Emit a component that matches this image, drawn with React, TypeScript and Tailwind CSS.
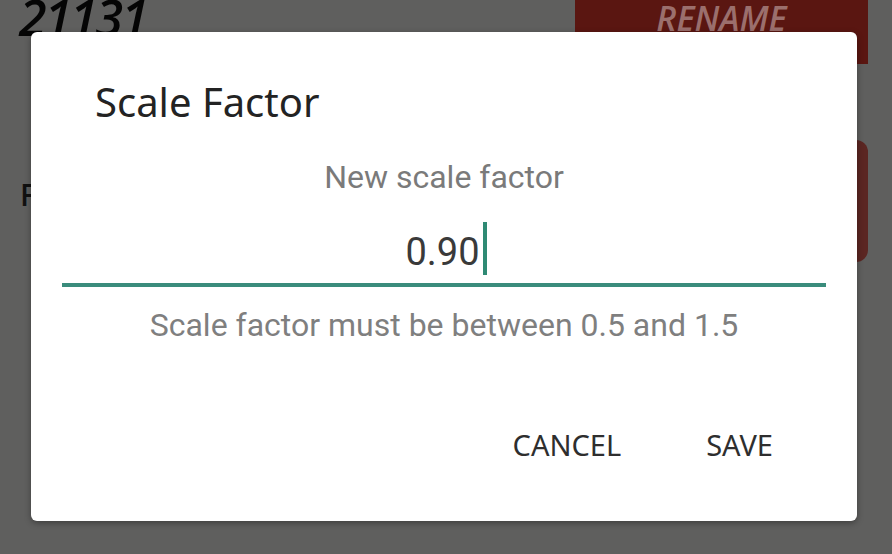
export default function App() {
  return (
    <div className="relative h-[554px] w-[892px] overflow-hidden bg-[#5f5f5e]">
      {/* page behind the dimmed overlay */}
      <div className="flex flex-col">
        <div className="flex items-start justify-between">
          <div
            className="ml-[19px] mt-[-8px] text-[50px] font-semibold italic leading-none tracking-[-2px] text-[#050505]"
            style={{ fontFamily: '"Open Sans", sans-serif' }}
          >
            21131
          </div>
          <div className="mr-[24px] flex h-[64px] w-[293px] items-start justify-center bg-[#5a1611] pt-[1px]">
            <span
              className="text-[34px] font-semibold italic leading-none text-[#9b6f6d]"
              style={{ fontFamily: '"Open Sans", sans-serif' }}
            >
              RENAME
            </span>
          </div>
        </div>
        <div className="mt-[76px] flex items-start justify-between">
          <div
            className="ml-[20px] mt-[40px] text-[30px] font-semibold leading-none text-[#111]"
            style={{ fontFamily: '"Open Sans", sans-serif' }}
          >
            Font size
          </div>
          <div className="mr-[24px] h-[122px] w-[293px] rounded-[12px] bg-[#5b2622]" />
        </div>
      </div>

      {/* dialog */}
      <div className="absolute left-[31px] top-[32px] flex h-[489px] w-[826px] flex-col rounded-[6px] bg-white shadow-[0_2px_6px_rgba(0,0,0,0.35)]">
        <div
          className="ml-[64px] mt-[50px] text-[40px] leading-none text-[#232323]"
          style={{ fontFamily: '"Noto Sans", sans-serif' }}
        >
          Scale Factor
        </div>
        <div
          className="mt-[39px] text-center text-[32px] leading-none text-[#7a7a7a]"
          style={{ fontFamily: 'Roboto, sans-serif' }}
        >
          New scale factor
        </div>
        <div className="mx-[31px] mt-[29px] flex h-[65px] items-start justify-center border-b-4 border-[#3a8c7c]">
          <span
            className="ml-[4px] mt-[11px] text-[38px] leading-none text-[#3a3a3a]"
            style={{ fontFamily: 'Roboto, sans-serif' }}
          >
            0.90
          </span>
          <span className="ml-[3px] h-[53px] w-[4px] bg-[#2f8a74]" />
        </div>
        <div
          className="mt-[22px] text-center text-[32px] leading-none text-[#7f7f7f]"
          style={{ fontFamily: 'Roboto, sans-serif' }}
        >
          Scale factor must be between 0.5 and 1.5
        </div>
        <div
          className="mt-[89px] flex justify-end gap-[85px] pr-[84px] text-[29px] leading-none text-[#2e2e2e]"
          style={{ fontFamily: '"Noto Sans", sans-serif' }}
        >
          <span>CANCEL</span>
          <span>SAVE</span>
        </div>
      </div>
    </div>
  );
}
